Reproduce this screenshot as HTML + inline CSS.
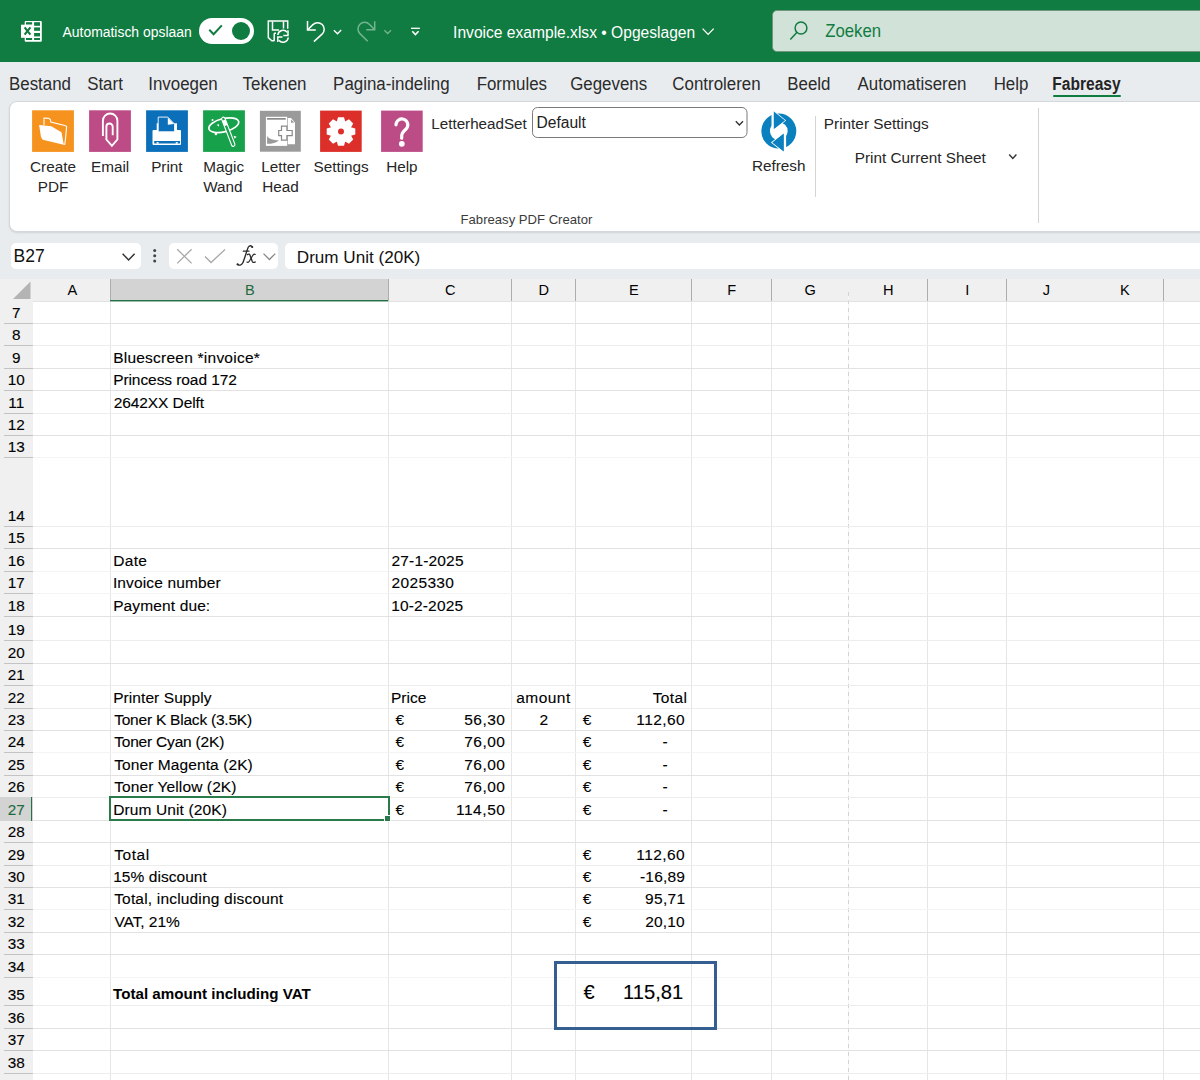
<!DOCTYPE html><html><head><meta charset="utf-8"><style>
*{margin:0;padding:0;box-sizing:border-box}
html,body{width:1200px;height:1080px;overflow:hidden;background:#fff;font-family:"Liberation Sans",sans-serif;color:#262626}
.a{position:absolute}
.t{position:absolute;white-space:nowrap;line-height:1}
</style></head><body>

<div class="a" style="left:0px;top:0px;width:1200px;height:62px;background:#107c41"></div>
<div class="a" style="left:0px;top:62px;width:1200px;height:217px;background:#e9ecef"></div>
<div class="a" style="left:9px;top:101px;width:1220px;height:131px;background:#fff;border-radius:8px;border:1px solid #d4d7db;box-shadow:0 1px 2px rgba(0,0,0,0.10)"></div>
<div class="a" style="left:11px;top:243px;width:130px;height:26px;background:#fff;border-radius:5px"></div>
<div class="a" style="left:169px;top:243px;width:109px;height:26px;background:#fff;border-radius:5px"></div>
<div class="a" style="left:285px;top:243px;width:930px;height:26px;background:#fff;border-radius:5px"></div>
<svg class="a" style="left:0;top:0" width="1200" height="62" viewBox="0 0 1200 62">
<rect x="24.7" y="21" width="17.1" height="20.8" rx="1" fill="#fff"/>
<g fill="#107c41">
<rect x="34.1" y="22.2" width="5.9" height="3.6"/><rect x="34.1" y="27.4" width="5.9" height="3.4"/><rect x="34.1" y="33" width="5.9" height="3.4"/><rect x="34.1" y="38" width="5.9" height="2"/>
<rect x="26" y="22.2" width="6.1" height="2.5"/><rect x="26" y="38" width="6.1" height="2"/>
</g>
<rect x="21" y="24.7" width="12.8" height="13.1" fill="#fff"/>
<path d="M24.6,27.3 L30.4,34.7 M30.4,27.3 L24.6,34.7" stroke="#107c41" stroke-width="2.1" fill="none"/>
<rect x="199" y="18" width="55" height="26" rx="13" fill="#fff"/>
<circle cx="241" cy="31" r="9" fill="#107c41"/>
<path d="M209.3,29.8 L213.6,34.2 L221.8,25.4" stroke="#107c41" stroke-width="2" fill="none"/>
<g stroke="#fff" stroke-width="1.5" fill="none">
<path d="M287.7,28.8 V21.1 H268.3 V37.6 L271.8,40.7 H274.5"/>
<path d="M272.5,21.5 V30 H279"/>
<path d="M283.5,21.5 V28.5"/>
<path d="M274.2,33.3 H276 M274.2,33.3 V40.7"/>
<path d="M277.8,35 A5.3,5.3 0 0 1 287.2,32.3"/><path d="M288,30.2 V35.5 H283.3"/>
<path d="M288.3,37.5 A5.3,5.3 0 0 1 278.9,40.3"/><path d="M277.8,42 V37 H282.5"/>
<path d="M307.5,21 V30 H315.8"/>
<path d="M308,29.5 L312.9,24.6 A6.6,6.6 0 0 1 322.3,33.9 L313.9,41.6"/>
<path d="M333.9,30.2 L337.5,33.7 L341.2,30.1" stroke-width="1.4"/>
<path d="M411,28.3 H419.9" stroke-width="1.3"/>
<path d="M412.3,31.3 L415.4,34.5 L418.6,31.3" stroke-width="1.6"/>
<path d="M702.6,28.6 L708.1,34.4 L713.7,28.6" stroke-width="1.3"/>
</g>
<g stroke="#74b490" stroke-width="1.5" fill="none">
<path d="M374.7,21.3 V29.7 H366.3"/>
<path d="M374.2,29.2 L369.3,24.3 A6.6,6.6 0 0 0 359.9,33.6 L367.7,41.3"/>
<path d="M384.3,30.2 L387.7,33.5 L391,30.2" stroke-width="1.3"/>
</g>
<rect x="772.5" y="10.5" width="440" height="41" rx="4.5" fill="#d1e3d8" stroke="#6f8f7b" stroke-width="0.8"/>
<g stroke="#107c41" stroke-width="1.5" fill="none"><circle cx="801" cy="28" r="5.9"/><path d="M797,32.3 L790.3,39.6"/></g>
</svg>
<div class="t" style="left:62.50px;top:25.57px;font-size:13.93px;color:#fff;transform:scaleY(1.06);transform-origin:0 11.98px;">Automatisch opslaan</div>
<div class="t" style="left:453.10px;top:24.88px;font-size:15.6px;color:#fff;">Invoice example.xlsx • Opgeslagen</div>
<div class="t" style="left:825.20px;top:24.19px;font-size:16.76px;color:#107c41;transform:scaleY(1.08);transform-origin:0 14.41px;">Zoeken</div>
<div class="t" style="left:-160.00px;width:400px;text-align:center;top:76.87px;font-size:16.9px;color:#2b2b2b;transform:scaleY(1.09);transform-origin:0 14.53px;">Bestand</div>
<div class="t" style="left:-95.00px;width:400px;text-align:center;top:76.87px;font-size:16.9px;color:#2b2b2b;transform:scaleY(1.09);transform-origin:0 14.53px;">Start</div>
<div class="t" style="left:-17.00px;width:400px;text-align:center;top:76.87px;font-size:16.9px;color:#2b2b2b;transform:scaleY(1.09);transform-origin:0 14.53px;">Invoegen</div>
<div class="t" style="left:74.50px;width:400px;text-align:center;top:76.87px;font-size:16.9px;color:#2b2b2b;transform:scaleY(1.09);transform-origin:0 14.53px;">Tekenen</div>
<div class="t" style="left:191.35px;width:400px;text-align:center;top:76.87px;font-size:16.9px;color:#2b2b2b;transform:scaleY(1.09);transform-origin:0 14.53px;">Pagina-indeling</div>
<div class="t" style="left:311.85px;width:400px;text-align:center;top:76.87px;font-size:16.9px;color:#2b2b2b;transform:scaleY(1.09);transform-origin:0 14.53px;">Formules</div>
<div class="t" style="left:408.65px;width:400px;text-align:center;top:76.87px;font-size:16.9px;color:#2b2b2b;transform:scaleY(1.09);transform-origin:0 14.53px;">Gegevens</div>
<div class="t" style="left:516.50px;width:400px;text-align:center;top:76.87px;font-size:16.9px;color:#2b2b2b;transform:scaleY(1.09);transform-origin:0 14.53px;">Controleren</div>
<div class="t" style="left:608.90px;width:400px;text-align:center;top:76.87px;font-size:16.9px;color:#2b2b2b;transform:scaleY(1.09);transform-origin:0 14.53px;">Beeld</div>
<div class="t" style="left:712.00px;width:400px;text-align:center;top:76.87px;font-size:16.9px;color:#2b2b2b;transform:scaleY(1.09);transform-origin:0 14.53px;">Automatiseren</div>
<div class="t" style="left:811.00px;width:400px;text-align:center;top:76.87px;font-size:16.9px;color:#2b2b2b;transform:scaleY(1.09);transform-origin:0 14.53px;">Help</div>
<div class="t" style="left:886.50px;width:400px;text-align:center;top:77.33px;font-size:15.55px;color:#242424;font-weight:bold;transform:scaleY(1.2);transform-origin:0 13.37px;">Fabreasy</div>
<div class="a" style="left:1053px;top:94.7px;width:68px;height:2.6px;background:#107c41;border-radius:1.3px"></div>
<svg class="a" style="left:0;top:0" width="1200" height="240" viewBox="0 0 1200 240"><g transform="translate(32.1,110.3)"><rect width="41.8" height="41.6" fill="#f6921e"/>
<path d="M11.9,14.7 V7.7 L16.6,8.1 L18.3,9.2 L18.7,11.7 L33.6,15.5 L34.5,16.4 L33.6,26.6 L32.6,34.7" stroke="#fff" stroke-width="1.1" fill="none"/>
<path d="M7,14.7 L19.2,16 L29.4,21.9 L31.5,33.4 L32.6,34.7 L10.6,29.4 L8.9,26.6 Z" fill="#fff"/></g>
<g transform="translate(89.1,110.3)"><rect width="41.8" height="41.6" fill="#bd4b85"/>
<path d="M13.8,25.8 V10.4 A7.25,7.25 0 0 1 28.3,10.4 V29.2 L22.8,35.6 L17.3,29.2 V16.4 A3.15,3.15 0 0 1 23.6,16.4 V24.9" stroke="#fff" stroke-width="1.9" fill="none"/></g>
<g transform="translate(146.1,110.3)"><rect width="41.8" height="41.6" fill="#0b6fba"/>
<rect x="6.4" y="19.6" width="28.5" height="15.1" rx="1" fill="#fff"/>
<rect x="10.6" y="13" width="20.3" height="7" fill="#fff"/>
<path d="M12.1,21.5 V6.8 H21.7 L28.5,13.8 V21.5 Z" fill="#0b6fba" stroke="#fff" stroke-width="0.9"/>
<path d="M21.7,7.3 L28,13.8 L21.7,14.4 Z" fill="#fff"/>
<rect x="8.1" y="30.7" width="25.8" height="2.5" fill="#0b6fba"/>
<rect x="10.5" y="31.8" width="2" height="1.6" fill="#fff"/><rect x="29.6" y="31.8" width="2" height="1.6" fill="#fff"/></g>
<g transform="translate(203.1,110.3)"><rect width="41.8" height="41.6" fill="#17a14a"/>
<ellipse cx="20.7" cy="14.9" rx="15.3" ry="6.6" transform="rotate(-14 20.7 14.9)" stroke="#fff" stroke-width="1.7" fill="none"/>
<g transform="rotate(-21 19.8 8)"><rect x="18.3" y="7" width="3.4" height="31" rx="1.7" stroke="#fff" stroke-width="1.1" fill="#17a14a"/><rect x="18.3" y="10" width="3.4" height="6" fill="#fff"/></g>
<circle cx="9.4" cy="9.8" r="1" fill="#fff"/><path d="M13.5,14.5 L16,14 L15.8,16.5Z" fill="#fff"/><circle cx="12.8" cy="23.6" r="1.3" fill="#fff"/><path d="M30.5,25.5 L33.5,26.5 L31.5,28.5Z" fill="#fff"/></g>
<g transform="translate(259.9,110.8)"><rect width="40.9" height="40.9" fill="#9a9a9a"/>
<rect x="6" y="6" width="21.3" height="29.1" fill="#fff"/>
<rect x="7.2" y="7.2" width="18.6" height="1.7" fill="#8a8a8a"/>
<path d="M7.2,25.3 Q10,29.6 19,29.6 Q15,33 7.2,33 Z" fill="#9a9a9a"/>
<path d="M27.9,7.2 H31.1 L35.1,11.7 V33.4 H27.9 Z" fill="#fff"/>
<path d="M31.1,8.7 L34.5,11.7 L31.1,11.9Z" fill="#9a9a9a"/>
<path d="M21.6,15.4 H27 V19.7 H32.3 V24.8 H27 V29.3 H21.6 V24.8 H18.8 V19.7 H21.6 Z" fill="#fff" stroke="#8a8a8a" stroke-width="1.2"/></g>
<g transform="translate(320.1,110.6)"><rect width="41.6" height="41.3" fill="#dc2f2a"/>
<path d="M16.70,10.95 L17.90,6.61 L23.90,6.61 L25.10,10.95 L24.97,10.89 L28.88,8.68 L33.12,12.92 L30.91,16.83 L30.85,16.70 L35.19,17.90 L35.19,23.90 L30.85,25.10 L30.91,24.97 L33.12,28.88 L28.88,33.12 L24.97,30.91 L25.10,30.85 L23.90,35.19 L17.90,35.19 L16.70,30.85 L16.83,30.91 L12.92,33.12 L8.68,28.88 L10.89,24.97 L10.95,25.10 L6.61,23.90 L6.61,17.90 L10.95,16.70 L10.89,16.83 L8.68,12.92 L12.92,8.68 L16.83,10.89Z" fill="#fff"/><circle cx="20.9" cy="20.9" r="3" fill="#dc2f2a"/></g>
<g transform="translate(381.1,110.6)"><rect width="41.6" height="41.3" fill="#bc4c86"/>
<path d="M14.9,14.2 A5.9,5.9 0 1 1 25.2,18.2 Q20.6,22.3 20.6,25.2 V27.6" stroke="#fff" stroke-width="3.2" fill="none" stroke-linecap="round"/>
<circle cx="20.7" cy="33.2" r="2.9" fill="#fff"/></g>
<g><circle cx="778.8" cy="131.1" r="13.2" stroke="#0a80bf" stroke-width="8.6" fill="none"/>
<path d="M773.8,111.2 L785.2,120.4 L773.8,129.6 Z" fill="#0a80bf" stroke="#fff" stroke-width="1.1"/>
<path d="M783.8,133 L771.8,142.6 L783.8,152 Z" fill="#0a80bf" stroke="#fff" stroke-width="1.1"/>
<rect x="771.5" y="112" width="2.3" height="17" fill="#fff"/><rect x="783.8" y="133.5" width="2.3" height="17" fill="#fff"/>
<path d="M773.8,111.6 L785,120.4 L773.8,129.1 Z" fill="#0a80bf"/><path d="M783.8,133.5 L772.4,142.6 L783.8,151.6 Z" fill="#0a80bf"/></g>
<rect x="532.5" y="107.5" width="214.5" height="30" rx="5" fill="#fff" stroke="#7a7a7a" stroke-width="1"/>
<path d="M735.8,121.3 L739.4,125 L743,121.3" stroke="#333" stroke-width="1.4" fill="none"/>
<path d="M1009.2,154.5 L1012.8,158.5 L1016.4,154.5" stroke="#333" stroke-width="1.4" fill="none"/>
<rect x="815" y="116" width="1" height="81" fill="#d4d4d4"/>
<rect x="1038" y="108" width="1" height="115" fill="#d4d4d4"/>
</svg>
<div class="t" style="left:-147.05px;width:400px;text-align:center;top:158.54px;font-size:15.3px;color:#262626;">Create</div>
<div class="t" style="left:-147.00px;width:400px;text-align:center;top:178.74px;font-size:15.3px;color:#262626;">PDF</div>
<div class="t" style="left:-89.90px;width:400px;text-align:center;top:158.54px;font-size:15.3px;color:#262626;">Email</div>
<div class="t" style="left:-33.10px;width:400px;text-align:center;top:158.54px;font-size:15.3px;color:#262626;">Print</div>
<div class="t" style="left:23.65px;width:400px;text-align:center;top:158.54px;font-size:15.3px;color:#262626;">Magic</div>
<div class="t" style="left:22.88px;width:400px;text-align:center;top:178.74px;font-size:15.3px;color:#262626;">Wand</div>
<div class="t" style="left:80.75px;width:400px;text-align:center;top:158.54px;font-size:15.3px;color:#262626;">Letter</div>
<div class="t" style="left:80.60px;width:400px;text-align:center;top:178.74px;font-size:15.3px;color:#262626;">Head</div>
<div class="t" style="left:141.12px;width:400px;text-align:center;top:158.54px;font-size:15.3px;color:#262626;">Settings</div>
<div class="t" style="left:201.88px;width:400px;text-align:center;top:158.54px;font-size:15.3px;color:#262626;">Help</div>
<div class="t" style="left:578.75px;width:400px;text-align:center;top:158.04px;font-size:15.3px;color:#262626;">Refresh</div>
<div class="t" style="left:431.30px;top:116.43px;font-size:15.2px;color:#262626;">LetterheadSet</div>
<div class="t" style="left:536.50px;top:115.28px;font-size:15.6px;color:#222;">Default</div>
<div class="t" style="left:823.80px;top:115.90px;font-size:15.35px;color:#262626;">Printer Settings</div>
<div class="t" style="left:854.80px;top:150.24px;font-size:15.3px;color:#262626;">Print Current Sheet</div>
<div class="t" style="left:460.60px;top:213.33px;font-size:13.1px;color:#3b3b3b;">Fabreasy PDF Creator</div>
<svg class="a" style="left:0;top:236px" width="1200" height="40" viewBox="0 236 1200 40">
<path d="M122.6,253.8 L128.6,260 L134.6,253.8" stroke="#333" stroke-width="1.5" fill="none"/>
<circle cx="154.7" cy="250.5" r="1.5" fill="#444"/><circle cx="154.7" cy="255.7" r="1.5" fill="#444"/><circle cx="154.7" cy="260.9" r="1.5" fill="#444"/>
<path d="M177.2,249.2 L191.6,263.4 M191.6,249.2 L177.2,263.4" stroke="#a8a8a8" stroke-width="1.3" fill="none"/>
<path d="M205,256.5 L211,262.5 L225,249.5" stroke="#a8a8a8" stroke-width="1.3" fill="none"/>
<g stroke="#2a2a2a" fill="none" stroke-linecap="round">
<path d="M252.3,247 C251.5,245.4 249.6,245.2 248.4,247 C247.2,249 244.3,260 242.7,263 C241.6,265.3 239.2,265.7 237.4,264.4" stroke-width="1.35"/>
<path d="M243.2,251.2 H249" stroke-width="1.2"/>
<path d="M247.4,254.6 C248.6,253.8 249.6,254.1 250.1,255.5 L252.3,261.4 C252.8,262.6 254,262.8 255.2,261.9" stroke-width="1.3"/>
<path d="M255.2,254.4 C254.5,254 253.6,254.3 252.8,255.3 L249.6,260.7 C248.8,262.3 247.8,262.6 247,262.1" stroke-width="1.2"/>
</g>
<circle cx="252.2" cy="247" r="1.05" fill="#2a2a2a"/><circle cx="237.6" cy="264.2" r="1.05" fill="#2a2a2a"/>
<path d="M263.5,253.6 L269.4,259.5 L275.3,253.6" stroke="#888" stroke-width="1.3" fill="none"/>
</svg>
<div class="t" style="left:13.60px;top:248.45px;font-size:17.5px;color:#111;">B27</div>
<div class="t" style="left:296.80px;top:248.59px;font-size:17.1px;color:#111;">Drum Unit (20K)</div>
<div class="a" style="left:0px;top:279px;width:1200px;height:23px;background:#f0f0f0"></div>
<div class="a" style="left:0px;top:302px;width:33px;height:778px;background:#f0f0f0"></div>
<div class="a" style="left:110px;top:279px;width:278px;height:23px;background:#d3d3d3"></div>
<div class="a" style="left:110px;top:300px;width:278px;height:1px;background:#217346"></div>
<div class="a" style="left:110px;top:301px;width:278px;height:1px;background:rgba(33,115,70,0.35)"></div>
<svg class="a" style="left:12px;top:281px" width="19" height="19"><polygon points="18.5,0.5 18.5,18 1,18" fill="#b4b4b4"/></svg>
<div class="a" style="left:110px;top:302px;width:1px;height:778px;background:#e6e6e6"></div>
<div class="a" style="left:110px;top:279px;width:1px;height:22px;background:#adadad"></div>
<div class="a" style="left:388px;top:302px;width:1px;height:778px;background:#e6e6e6"></div>
<div class="a" style="left:388px;top:279px;width:1px;height:22px;background:#adadad"></div>
<div class="a" style="left:511px;top:302px;width:1px;height:778px;background:#e6e6e6"></div>
<div class="a" style="left:511px;top:279px;width:1px;height:22px;background:#adadad"></div>
<div class="a" style="left:575px;top:302px;width:1px;height:778px;background:#e6e6e6"></div>
<div class="a" style="left:575px;top:279px;width:1px;height:22px;background:#adadad"></div>
<div class="a" style="left:691px;top:302px;width:1px;height:778px;background:#e6e6e6"></div>
<div class="a" style="left:691px;top:279px;width:1px;height:22px;background:#adadad"></div>
<div class="a" style="left:771px;top:302px;width:1px;height:778px;background:#e6e6e6"></div>
<div class="a" style="left:771px;top:279px;width:1px;height:22px;background:#adadad"></div>
<div class="a" style="left:848px;top:292px;width:1px;height:788px;background:repeating-linear-gradient(to bottom,#d2d3d8 0 4px,#f6f6f6 4px 8px)"></div>
<div class="a" style="left:927px;top:302px;width:1px;height:778px;background:#e6e6e6"></div>
<div class="a" style="left:927px;top:279px;width:1px;height:22px;background:#adadad"></div>
<div class="a" style="left:1006px;top:302px;width:1px;height:778px;background:#e6e6e6"></div>
<div class="a" style="left:1006px;top:279px;width:1px;height:22px;background:#adadad"></div>
<div class="a" style="left:1163px;top:302px;width:1px;height:778px;background:#e6e6e6"></div>
<div class="a" style="left:1163px;top:279px;width:1px;height:22px;background:#adadad"></div>
<div class="a" style="left:33px;top:323px;width:1167px;height:1px;background:#e2e2e2"></div>
<div class="a" style="left:4px;top:323px;width:29px;height:1px;background:#c3c3c3"></div>
<div class="a" style="left:33px;top:345px;width:1167px;height:1px;background:#ededed"></div>
<div class="a" style="left:4px;top:345px;width:29px;height:1px;background:#c3c3c3"></div>
<div class="a" style="left:33px;top:368px;width:1167px;height:1px;background:#e2e2e2"></div>
<div class="a" style="left:4px;top:368px;width:29px;height:1px;background:#c3c3c3"></div>
<div class="a" style="left:33px;top:390px;width:1167px;height:1px;background:#e2e2e2"></div>
<div class="a" style="left:4px;top:390px;width:29px;height:1px;background:#c3c3c3"></div>
<div class="a" style="left:33px;top:413px;width:1167px;height:1px;background:#ededed"></div>
<div class="a" style="left:4px;top:413px;width:29px;height:1px;background:#c3c3c3"></div>
<div class="a" style="left:33px;top:435px;width:1167px;height:1px;background:#e2e2e2"></div>
<div class="a" style="left:4px;top:435px;width:29px;height:1px;background:#c3c3c3"></div>
<div class="a" style="left:33px;top:457px;width:1167px;height:1px;background:#f4f4f4"></div>
<div class="a" style="left:4px;top:457px;width:29px;height:1px;background:#c3c3c3"></div>
<div class="a" style="left:33px;top:526px;width:1167px;height:1px;background:#ededed"></div>
<div class="a" style="left:4px;top:526px;width:29px;height:1px;background:#c3c3c3"></div>
<div class="a" style="left:33px;top:548px;width:1167px;height:1px;background:#e2e2e2"></div>
<div class="a" style="left:4px;top:548px;width:29px;height:1px;background:#c3c3c3"></div>
<div class="a" style="left:33px;top:571px;width:1167px;height:1px;background:#f4f4f4"></div>
<div class="a" style="left:4px;top:571px;width:29px;height:1px;background:#c3c3c3"></div>
<div class="a" style="left:33px;top:593px;width:1167px;height:1px;background:#f4f4f4"></div>
<div class="a" style="left:4px;top:593px;width:29px;height:1px;background:#c3c3c3"></div>
<div class="a" style="left:33px;top:616px;width:1167px;height:1px;background:#e2e2e2"></div>
<div class="a" style="left:4px;top:616px;width:29px;height:1px;background:#c3c3c3"></div>
<div class="a" style="left:33px;top:640px;width:1167px;height:1px;background:#ededed"></div>
<div class="a" style="left:4px;top:640px;width:29px;height:1px;background:#c3c3c3"></div>
<div class="a" style="left:33px;top:663px;width:1167px;height:1px;background:#e2e2e2"></div>
<div class="a" style="left:4px;top:663px;width:29px;height:1px;background:#c3c3c3"></div>
<div class="a" style="left:33px;top:685px;width:1167px;height:1px;background:#ededed"></div>
<div class="a" style="left:4px;top:685px;width:29px;height:1px;background:#c3c3c3"></div>
<div class="a" style="left:33px;top:708px;width:1167px;height:1px;background:#ededed"></div>
<div class="a" style="left:4px;top:708px;width:29px;height:1px;background:#c3c3c3"></div>
<div class="a" style="left:33px;top:730px;width:1167px;height:1px;background:#e2e2e2"></div>
<div class="a" style="left:4px;top:730px;width:29px;height:1px;background:#c3c3c3"></div>
<div class="a" style="left:33px;top:752px;width:1167px;height:1px;background:#f4f4f4"></div>
<div class="a" style="left:4px;top:752px;width:29px;height:1px;background:#c3c3c3"></div>
<div class="a" style="left:33px;top:775px;width:1167px;height:1px;background:#e2e2e2"></div>
<div class="a" style="left:4px;top:775px;width:29px;height:1px;background:#c3c3c3"></div>
<div class="a" style="left:33px;top:797px;width:1167px;height:1px;background:#ededed"></div>
<div class="a" style="left:4px;top:797px;width:29px;height:1px;background:#c3c3c3"></div>
<div class="a" style="left:33px;top:820px;width:1167px;height:1px;background:#e2e2e2"></div>
<div class="a" style="left:4px;top:820px;width:29px;height:1px;background:#c3c3c3"></div>
<div class="a" style="left:33px;top:842px;width:1167px;height:1px;background:#e2e2e2"></div>
<div class="a" style="left:4px;top:842px;width:29px;height:1px;background:#c3c3c3"></div>
<div class="a" style="left:33px;top:865px;width:1167px;height:1px;background:#ededed"></div>
<div class="a" style="left:4px;top:865px;width:29px;height:1px;background:#c3c3c3"></div>
<div class="a" style="left:33px;top:887px;width:1167px;height:1px;background:#e2e2e2"></div>
<div class="a" style="left:4px;top:887px;width:29px;height:1px;background:#c3c3c3"></div>
<div class="a" style="left:33px;top:909px;width:1167px;height:1px;background:#f4f4f4"></div>
<div class="a" style="left:4px;top:909px;width:29px;height:1px;background:#c3c3c3"></div>
<div class="a" style="left:33px;top:932px;width:1167px;height:1px;background:#e2e2e2"></div>
<div class="a" style="left:4px;top:932px;width:29px;height:1px;background:#c3c3c3"></div>
<div class="a" style="left:33px;top:954px;width:1167px;height:1px;background:#e2e2e2"></div>
<div class="a" style="left:4px;top:954px;width:29px;height:1px;background:#c3c3c3"></div>
<div class="a" style="left:33px;top:977px;width:1167px;height:1px;background:#f4f4f4"></div>
<div class="a" style="left:4px;top:977px;width:29px;height:1px;background:#c3c3c3"></div>
<div class="a" style="left:33px;top:1005px;width:1167px;height:1px;background:#ededed"></div>
<div class="a" style="left:4px;top:1005px;width:29px;height:1px;background:#c3c3c3"></div>
<div class="a" style="left:33px;top:1028px;width:1167px;height:1px;background:#e2e2e2"></div>
<div class="a" style="left:4px;top:1028px;width:29px;height:1px;background:#c3c3c3"></div>
<div class="a" style="left:33px;top:1050px;width:1167px;height:1px;background:#e2e2e2"></div>
<div class="a" style="left:4px;top:1050px;width:29px;height:1px;background:#c3c3c3"></div>
<div class="a" style="left:33px;top:1073px;width:1167px;height:1px;background:#ededed"></div>
<div class="a" style="left:4px;top:1073px;width:29px;height:1px;background:#c3c3c3"></div>
<div class="a" style="left:33px;top:1095px;width:1167px;height:1px;background:#e2e2e2"></div>
<div class="a" style="left:4px;top:1095px;width:29px;height:1px;background:#c3c3c3"></div>
<div class="a" style="left:33px;top:301px;width:1167px;height:1px;background:#e2e2e2"></div>
<div class="a" style="left:110px;top:300px;width:278px;height:1px;background:#217346"></div>
<div class="a" style="left:110px;top:301px;width:278px;height:1px;background:rgba(33,115,70,0.35)"></div>
<div class="a" style="left:0px;top:797px;width:33px;height:24px;background:#d3d3d3"></div>
<div class="a" style="left:31px;top:797px;width:1px;height:24px;background:#217346"></div>
<div class="t" style="left:-127.70px;width:400px;text-align:center;top:283.14px;font-size:14.6px;color:#000;">A</div>
<div class="t" style="left:49.80px;width:400px;text-align:center;top:283.14px;font-size:14.6px;color:#1e6b3f;">B</div>
<div class="t" style="left:250.30px;width:400px;text-align:center;top:283.14px;font-size:14.6px;color:#000;">C</div>
<div class="t" style="left:343.80px;width:400px;text-align:center;top:283.14px;font-size:14.6px;color:#000;">D</div>
<div class="t" style="left:433.80px;width:400px;text-align:center;top:283.14px;font-size:14.6px;color:#000;">E</div>
<div class="t" style="left:531.80px;width:400px;text-align:center;top:283.14px;font-size:14.6px;color:#000;">F</div>
<div class="t" style="left:610.30px;width:400px;text-align:center;top:283.14px;font-size:14.6px;color:#000;">G</div>
<div class="t" style="left:688.30px;width:400px;text-align:center;top:283.14px;font-size:14.6px;color:#000;">H</div>
<div class="t" style="left:767.30px;width:400px;text-align:center;top:283.14px;font-size:14.6px;color:#000;">I</div>
<div class="t" style="left:846.30px;width:400px;text-align:center;top:283.14px;font-size:14.6px;color:#000;">J</div>
<div class="t" style="left:924.80px;width:400px;text-align:center;top:283.14px;font-size:14.6px;color:#000;">K</div>
<div class="t" style="left:-183.70px;width:400px;text-align:center;top:304.64px;font-size:15.3px;color:#000;-webkit-text-stroke:0.12px #000">7</div>
<div class="t" style="left:-183.70px;width:400px;text-align:center;top:326.64px;font-size:15.3px;color:#000;-webkit-text-stroke:0.12px #000">8</div>
<div class="t" style="left:-183.70px;width:400px;text-align:center;top:349.64px;font-size:15.3px;color:#000;-webkit-text-stroke:0.12px #000">9</div>
<div class="t" style="left:-183.70px;width:400px;text-align:center;top:371.64px;font-size:15.3px;color:#000;-webkit-text-stroke:0.12px #000">10</div>
<div class="t" style="left:-183.70px;width:400px;text-align:center;top:394.64px;font-size:15.3px;color:#000;-webkit-text-stroke:0.12px #000">11</div>
<div class="t" style="left:-183.70px;width:400px;text-align:center;top:416.64px;font-size:15.3px;color:#000;-webkit-text-stroke:0.12px #000">12</div>
<div class="t" style="left:-183.70px;width:400px;text-align:center;top:438.64px;font-size:15.3px;color:#000;-webkit-text-stroke:0.12px #000">13</div>
<div class="t" style="left:-183.70px;width:400px;text-align:center;top:507.64px;font-size:15.3px;color:#000;-webkit-text-stroke:0.12px #000">14</div>
<div class="t" style="left:-183.70px;width:400px;text-align:center;top:529.64px;font-size:15.3px;color:#000;-webkit-text-stroke:0.12px #000">15</div>
<div class="t" style="left:-183.70px;width:400px;text-align:center;top:552.64px;font-size:15.3px;color:#000;-webkit-text-stroke:0.12px #000">16</div>
<div class="t" style="left:-183.70px;width:400px;text-align:center;top:574.64px;font-size:15.3px;color:#000;-webkit-text-stroke:0.12px #000">17</div>
<div class="t" style="left:-183.70px;width:400px;text-align:center;top:597.64px;font-size:15.3px;color:#000;-webkit-text-stroke:0.12px #000">18</div>
<div class="t" style="left:-183.70px;width:400px;text-align:center;top:621.64px;font-size:15.3px;color:#000;-webkit-text-stroke:0.12px #000">19</div>
<div class="t" style="left:-183.70px;width:400px;text-align:center;top:644.64px;font-size:15.3px;color:#000;-webkit-text-stroke:0.12px #000">20</div>
<div class="t" style="left:-183.70px;width:400px;text-align:center;top:666.64px;font-size:15.3px;color:#000;-webkit-text-stroke:0.12px #000">21</div>
<div class="t" style="left:-183.70px;width:400px;text-align:center;top:689.64px;font-size:15.3px;color:#000;-webkit-text-stroke:0.12px #000">22</div>
<div class="t" style="left:-183.70px;width:400px;text-align:center;top:711.64px;font-size:15.3px;color:#000;-webkit-text-stroke:0.12px #000">23</div>
<div class="t" style="left:-183.70px;width:400px;text-align:center;top:733.64px;font-size:15.3px;color:#000;-webkit-text-stroke:0.12px #000">24</div>
<div class="t" style="left:-183.70px;width:400px;text-align:center;top:756.64px;font-size:15.3px;color:#000;-webkit-text-stroke:0.12px #000">25</div>
<div class="t" style="left:-183.70px;width:400px;text-align:center;top:778.64px;font-size:15.3px;color:#000;-webkit-text-stroke:0.12px #000">26</div>
<div class="t" style="left:-183.70px;width:400px;text-align:center;top:801.64px;font-size:15.3px;color:#1e6b3f;-webkit-text-stroke:0.12px #1e6b3f">27</div>
<div class="t" style="left:-183.70px;width:400px;text-align:center;top:823.64px;font-size:15.3px;color:#000;-webkit-text-stroke:0.12px #000">28</div>
<div class="t" style="left:-183.70px;width:400px;text-align:center;top:846.64px;font-size:15.3px;color:#000;-webkit-text-stroke:0.12px #000">29</div>
<div class="t" style="left:-183.70px;width:400px;text-align:center;top:868.64px;font-size:15.3px;color:#000;-webkit-text-stroke:0.12px #000">30</div>
<div class="t" style="left:-183.70px;width:400px;text-align:center;top:890.64px;font-size:15.3px;color:#000;-webkit-text-stroke:0.12px #000">31</div>
<div class="t" style="left:-183.70px;width:400px;text-align:center;top:913.64px;font-size:15.3px;color:#000;-webkit-text-stroke:0.12px #000">32</div>
<div class="t" style="left:-183.70px;width:400px;text-align:center;top:935.64px;font-size:15.3px;color:#000;-webkit-text-stroke:0.12px #000">33</div>
<div class="t" style="left:-183.70px;width:400px;text-align:center;top:958.64px;font-size:15.3px;color:#000;-webkit-text-stroke:0.12px #000">34</div>
<div class="t" style="left:-183.70px;width:400px;text-align:center;top:986.64px;font-size:15.3px;color:#000;-webkit-text-stroke:0.12px #000">35</div>
<div class="t" style="left:-183.70px;width:400px;text-align:center;top:1009.64px;font-size:15.3px;color:#000;-webkit-text-stroke:0.12px #000">36</div>
<div class="t" style="left:-183.70px;width:400px;text-align:center;top:1031.64px;font-size:15.3px;color:#000;-webkit-text-stroke:0.12px #000">37</div>
<div class="t" style="left:-183.70px;width:400px;text-align:center;top:1054.64px;font-size:15.3px;color:#000;-webkit-text-stroke:0.12px #000">38</div>
<div class="t" style="left:-183.70px;width:400px;text-align:center;top:1076.64px;font-size:15.3px;color:#000;-webkit-text-stroke:0.12px #000">39</div>
<div class="t" style="left:113.15px;top:350.17px;font-size:15.5px;color:#000;letter-spacing:0.235px;-webkit-text-stroke:0.12px #000">Bluescreen *invoice*</div>
<div class="t" style="left:113.15px;top:372.17px;font-size:15.5px;color:#000;letter-spacing:-0.073px;-webkit-text-stroke:0.12px #000">Princess road 172</div>
<div class="t" style="left:113.65px;top:395.17px;font-size:15.5px;color:#000;letter-spacing:-0.075px;-webkit-text-stroke:0.12px #000">2642XX Delft</div>
<div class="t" style="left:113.15px;top:553.17px;font-size:15.5px;color:#000;letter-spacing:0.337px;-webkit-text-stroke:0.12px #000">Date</div>
<div class="t" style="left:112.90px;top:575.17px;font-size:15.5px;color:#000;letter-spacing:0.137px;-webkit-text-stroke:0.12px #000">Invoice number</div>
<div class="t" style="left:113.15px;top:598.17px;font-size:15.5px;color:#000;letter-spacing:0.127px;-webkit-text-stroke:0.12px #000">Payment due:</div>
<div class="t" style="left:113.15px;top:690.17px;font-size:15.5px;color:#000;letter-spacing:0.081px;-webkit-text-stroke:0.12px #000">Printer Supply</div>
<div class="t" style="left:114.15px;top:712.17px;font-size:15.5px;color:#000;letter-spacing:-0.218px;-webkit-text-stroke:0.12px #000">Toner K Black (3.5K)</div>
<div class="t" style="left:114.15px;top:734.17px;font-size:15.5px;color:#000;letter-spacing:-0.19px;-webkit-text-stroke:0.12px #000">Toner Cyan (2K)</div>
<div class="t" style="left:114.15px;top:757.17px;font-size:15.5px;color:#000;letter-spacing:0.095px;-webkit-text-stroke:0.12px #000">Toner Magenta (2K)</div>
<div class="t" style="left:114.15px;top:779.17px;font-size:15.5px;color:#000;letter-spacing:0.106px;-webkit-text-stroke:0.12px #000">Toner Yellow (2K)</div>
<div class="t" style="left:113.15px;top:802.17px;font-size:15.5px;color:#000;letter-spacing:0.126px;-webkit-text-stroke:0.12px #000">Drum Unit (20K)</div>
<div class="t" style="left:114.15px;top:847.17px;font-size:15.5px;color:#000;letter-spacing:0.559px;-webkit-text-stroke:0.12px #000">Total</div>
<div class="t" style="left:113.15px;top:869.17px;font-size:15.5px;color:#000;letter-spacing:0.058px;-webkit-text-stroke:0.12px #000">15% discount</div>
<div class="t" style="left:114.15px;top:891.17px;font-size:15.5px;color:#000;letter-spacing:0.183px;-webkit-text-stroke:0.12px #000">Total, including discount</div>
<div class="t" style="left:114.40px;top:914.17px;font-size:15.5px;color:#000;letter-spacing:-0.051px;-webkit-text-stroke:0.12px #000">VAT, 21%</div>
<div class="t" style="left:113.10px;top:985.97px;font-size:15.15px;color:#000;font-weight:bold;">Total amount including VAT</div>
<div class="t" style="left:391.55px;top:553.17px;font-size:15.5px;color:#000;letter-spacing:0.164px;-webkit-text-stroke:0.12px #000">27-1-2025</div>
<div class="t" style="left:391.55px;top:575.17px;font-size:15.5px;color:#000;letter-spacing:0.341px;-webkit-text-stroke:0.12px #000">2025330</div>
<div class="t" style="left:391.15px;top:598.17px;font-size:15.5px;color:#000;letter-spacing:0.16px;-webkit-text-stroke:0.12px #000">10-2-2025</div>
<div class="t" style="left:391.05px;top:690.17px;font-size:15.5px;color:#000;letter-spacing:-0.02px;-webkit-text-stroke:0.12px #000">Price</div>
<div class="t" style="left:516.25px;top:690.17px;font-size:15.5px;color:#000;letter-spacing:0.463px;-webkit-text-stroke:0.12px #000">amount</div>
<div class="t" style="right:512.60px;top:690.17px;font-size:15.5px;color:#000;letter-spacing:0.4px;-webkit-text-stroke:0.12px #000">Total</div>
<div class="t" style="left:395.50px;top:712.17px;font-size:15.5px;color:#000;-webkit-text-stroke:0.12px #000">€</div>
<div class="t" style="left:464.25px;top:712.17px;font-size:15.5px;color:#000;letter-spacing:0.472px;-webkit-text-stroke:0.12px #000">56,30</div>
<div class="t" style="left:395.50px;top:734.17px;font-size:15.5px;color:#000;-webkit-text-stroke:0.12px #000">€</div>
<div class="t" style="left:464.25px;top:734.17px;font-size:15.5px;color:#000;letter-spacing:0.472px;-webkit-text-stroke:0.12px #000">76,00</div>
<div class="t" style="left:395.50px;top:757.17px;font-size:15.5px;color:#000;-webkit-text-stroke:0.12px #000">€</div>
<div class="t" style="left:464.25px;top:757.17px;font-size:15.5px;color:#000;letter-spacing:0.472px;-webkit-text-stroke:0.12px #000">76,00</div>
<div class="t" style="left:395.50px;top:779.17px;font-size:15.5px;color:#000;-webkit-text-stroke:0.12px #000">€</div>
<div class="t" style="left:464.25px;top:779.17px;font-size:15.5px;color:#000;letter-spacing:0.472px;-webkit-text-stroke:0.12px #000">76,00</div>
<div class="t" style="left:395.50px;top:802.17px;font-size:15.5px;color:#000;-webkit-text-stroke:0.12px #000">€</div>
<div class="t" style="left:455.95px;top:802.17px;font-size:15.5px;color:#000;letter-spacing:0.543px;-webkit-text-stroke:0.12px #000">114,50</div>
<div class="t" style="left:343.80px;width:400px;text-align:center;top:712.17px;font-size:15.5px;color:#000;-webkit-text-stroke:0.12px #000">2</div>
<div class="t" style="left:582.70px;top:712.17px;font-size:15.5px;color:#000;-webkit-text-stroke:0.12px #000">€</div>
<div class="t" style="left:636.25px;top:712.17px;font-size:15.5px;color:#000;letter-spacing:0.443px;-webkit-text-stroke:0.12px #000">112,60</div>
<div class="t" style="left:582.70px;top:734.17px;font-size:15.5px;color:#000;-webkit-text-stroke:0.12px #000">€</div>
<div class="t" style="left:465.00px;width:400px;text-align:center;top:734.17px;font-size:15.5px;color:#000;-webkit-text-stroke:0.12px #000">-</div>
<div class="t" style="left:582.70px;top:757.17px;font-size:15.5px;color:#000;-webkit-text-stroke:0.12px #000">€</div>
<div class="t" style="left:465.00px;width:400px;text-align:center;top:757.17px;font-size:15.5px;color:#000;-webkit-text-stroke:0.12px #000">-</div>
<div class="t" style="left:582.70px;top:779.17px;font-size:15.5px;color:#000;-webkit-text-stroke:0.12px #000">€</div>
<div class="t" style="left:465.00px;width:400px;text-align:center;top:779.17px;font-size:15.5px;color:#000;-webkit-text-stroke:0.12px #000">-</div>
<div class="t" style="left:582.70px;top:802.17px;font-size:15.5px;color:#000;-webkit-text-stroke:0.12px #000">€</div>
<div class="t" style="left:465.00px;width:400px;text-align:center;top:802.17px;font-size:15.5px;color:#000;-webkit-text-stroke:0.12px #000">-</div>
<div class="t" style="left:582.70px;top:847.17px;font-size:15.5px;color:#000;-webkit-text-stroke:0.12px #000">€</div>
<div class="t" style="left:636.25px;top:847.17px;font-size:15.5px;color:#000;letter-spacing:0.443px;-webkit-text-stroke:0.12px #000">112,60</div>
<div class="t" style="left:582.70px;top:869.17px;font-size:15.5px;color:#000;-webkit-text-stroke:0.12px #000">€</div>
<div class="t" style="left:639.95px;top:869.17px;font-size:15.5px;color:#000;letter-spacing:0.206px;-webkit-text-stroke:0.12px #000">-16,89</div>
<div class="t" style="left:582.70px;top:891.17px;font-size:15.5px;color:#000;-webkit-text-stroke:0.12px #000">€</div>
<div class="t" style="left:645.05px;top:891.17px;font-size:15.5px;color:#000;letter-spacing:0.3px;-webkit-text-stroke:0.12px #000">95,71</div>
<div class="t" style="left:582.70px;top:914.17px;font-size:15.5px;color:#000;-webkit-text-stroke:0.12px #000">€</div>
<div class="t" style="left:645.25px;top:914.17px;font-size:15.5px;color:#000;letter-spacing:0.173px;-webkit-text-stroke:0.12px #000">20,10</div>
<div class="a" style="left:109px;top:796px;width:281px;height:25px;border:2px solid #2a7a4b"></div>
<div class="a" style="left:384px;top:815px;width:7px;height:7px;background:#fff"></div>
<div class="a" style="left:385px;top:816px;width:5px;height:5px;background:#2a7a4b"></div>
<div class="a" style="left:554px;top:961px;width:163px;height:69px;border:3px solid #365f91"></div>
<div class="t" style="left:583.50px;top:982.40px;font-size:20px;color:#000;-webkit-text-stroke:0.12px #000">€</div>
<div class="t" style="right:516.80px;top:982.23px;font-size:20.2px;color:#000;-webkit-text-stroke:0.12px #000">115,81</div>
</body></html>
